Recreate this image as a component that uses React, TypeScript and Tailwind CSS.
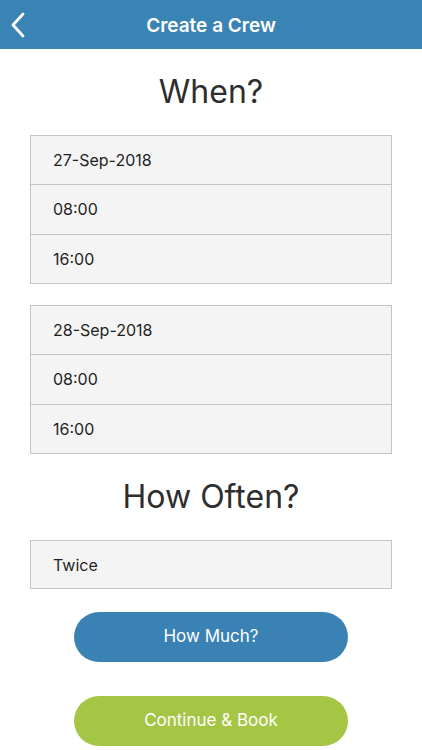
import React from 'react';

const DAYS = [
  { date: '27-Sep-2018', from: '08:00', to: '16:00' },
  { date: '28-Sep-2018', from: '08:00', to: '16:00' },
];

function Field({ children, last }: { children: React.ReactNode; last?: boolean }) {
  return (
    <div className={`flex-1 flex items-center pl-[22px] text-[16px] text-[#1f1f1f] ${last ? '' : 'border-b border-[#c4c4c4]'}`}>
      {children}
    </div>
  );
}

export default function App() {
  return (
    <div className="w-[422px] h-[750px] bg-white overflow-hidden font-['Inter','Liberation_Sans',sans-serif]">
      {/* Nav bar */}
      <div className="h-[49px] bg-[#3a83b5] flex items-center relative">
        <button className="absolute left-[8px] top-[12px] w-[20px] h-[26px] flex items-center justify-center" aria-label="Back">
          <svg width="16" height="26" viewBox="0 0 16 26" fill="none">
            <path d="M13 2 L3 13 L13 24" stroke="white" strokeWidth="2.8" strokeLinecap="round" strokeLinejoin="round" />
          </svg>
        </button>
        <h1 className="flex-1 text-center text-white text-[19px] font-semibold pt-[3px]">Create a Crew</h1>
      </div>

      <div className="px-[30px]">
        <div className="h-[86px] flex items-center justify-center">
          <h2 className="text-[32px] text-[#2e2e2e]">When?</h2>
        </div>

        <div className="flex flex-col gap-[21px]">
          {DAYS.map((d) => (
            <div key={d.date} className="h-[149px] flex flex-col border border-[#c4c4c4] bg-[#f4f4f4]">
              <Field>{d.date}</Field>
              <Field>{d.from}</Field>
              <Field last>{d.to}</Field>
            </div>
          ))}
        </div>

        <div className="h-[86px] flex items-center justify-center">
          <h2 className="text-[32px] text-[#2e2e2e]">How Often?</h2>
        </div>

        <div className="h-[49px] flex flex-col border border-[#c4c4c4] bg-[#f4f4f4]">
          <Field last>Twice</Field>
        </div>

        <div className="flex flex-col items-center gap-[34px] mt-[23px]">
          <button className="w-[274px] h-[50px] rounded-full bg-[#3a82b4] text-white text-[17px]">How Much?</button>
          <button className="w-[274px] h-[50px] rounded-full bg-[#a5c644] text-white text-[17px]">Continue &amp; Book</button>
        </div>
      </div>
    </div>
  );
}
